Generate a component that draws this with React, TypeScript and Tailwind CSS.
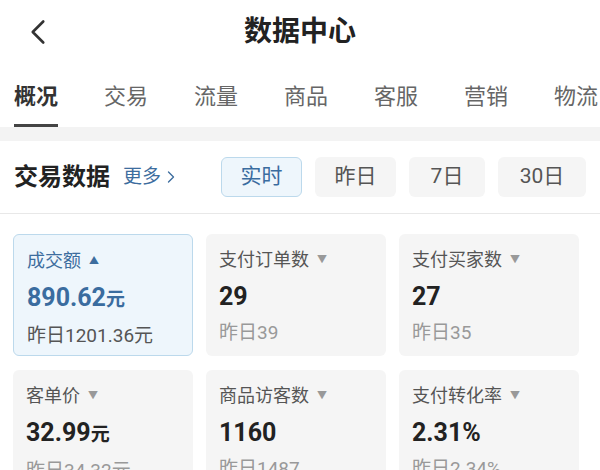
import { ChevronLeft, ChevronRight } from "lucide-react";

const tabs = ["概况", "交易", "流量", "商品", "客服", "营销", "物流"];
const ranges = ["实时", "昨日", "7日", "30日"];

const cards = [
  { label: "成交额", value: "890.62", unit: "元", prev: "昨日1201.36元", active: true },
  { label: "支付订单数", value: "29", prev: "昨日39" },
  { label: "支付买家数", value: "27", prev: "昨日35" },
  { label: "客单价", value: "32.99", unit: "元", prev: "昨日34.32元" },
  { label: "商品访客数", value: "1160", prev: "昨日1487" },
  { label: "支付转化率", value: "2.31%", prev: "昨日2.34%" },
];

function Card({ c }: { c: (typeof cards)[number] }) {
  return (
    <div
      className={`h-[122px] rounded-md pl-[13px] pt-[13px] ${
        c.active ? "border border-[#bcd9ec] bg-[#eef6fc]" : "bg-[#f5f5f5]"
      }`}
    >
      <div className={`flex items-center gap-2 text-[18px] leading-[26px] ${c.active ? "text-[#3d6d9e]" : "text-[#555]"}`}>
        {c.label}
        <span className={`text-[10px] ${c.active ? "text-[#3d6d9e]" : "text-[#999]"}`}>{c.active ? "▲" : "▼"}</span>
      </div>
      <div className={`mt-[9px] text-[25px] font-bold leading-[30px] ${c.active ? "text-[#3a6c9f]" : "text-[#222]"}`}>
        {c.value}
        {c.unit && <span className="text-[19px]">{c.unit}</span>}
      </div>
      <div className={`mt-[8px] text-[19px] leading-[26px] ${c.active ? "text-[#555]" : "text-[#999]"}`}>{c.prev}</div>
    </div>
  );
}

export default function App() {
  return (
    <div
      className="h-[470px] w-[600px] overflow-hidden bg-white"
      style={{ fontFamily: 'Roboto, "Noto Sans CJK SC", sans-serif' }}
    >
      <div className="relative flex h-[64px] items-center justify-center">
        <ChevronLeft className="absolute left-[17px] top-[11px] h-[42px] w-[42px] text-[#333]" strokeWidth={1.5} />
        <h1 className="text-[28px] font-bold text-[#222]">数据中心</h1>
      </div>

      <div className="flex h-[63px] gap-[46px] whitespace-nowrap pl-[14px]">
        {tabs.map((t, i) => (
          <div key={t} className="flex flex-col items-center">
            <div className={`mt-[18px] text-[22px] leading-[30px] ${i === 0 ? "font-bold text-[#333]" : "text-[#666]"}`}>{t}</div>
            {i === 0 && <div className="mt-[12px] h-[3px] w-[44px] bg-[#444]" />}
          </div>
        ))}
      </div>

      <div className="h-[14px] bg-[#f3f3f3]" />

      <div className="flex h-[73px] items-center border-b border-[#e8e8e8] pl-[14px]">
        <div className="text-[24px] font-bold text-[#222]">交易数据</div>
        <div className="ml-[13px] flex items-center text-[19px] text-[#3d6d9e]">
          更多
          <ChevronRight className="h-[20px] w-[20px]" strokeWidth={1.6} />
        </div>
        <div className="ml-[40px] flex gap-[13px]">
          {ranges.map((r, i) => (
            <div
              key={r}
              className={`flex h-[40px] items-center justify-center rounded-md text-[21px] ${
                i === 0
                  ? "w-[81px] border border-[#bcd9ec] bg-[#eef6fc] text-[#3a6c9f]"
                  : `bg-[#f5f5f5] text-[#555] ${i === 1 ? "w-[81px]" : i === 2 ? "w-[76px]" : "w-[88px]"}`
              }`}
            >
              {r}
            </div>
          ))}
        </div>
      </div>

      <div className="grid w-[592px] grid-cols-3 gap-x-[13px] gap-y-[14px] px-[13px] pt-[20px]">
        {cards.map((c) => (
          <Card key={c.label} c={c} />
        ))}
      </div>
    </div>
  );
}
